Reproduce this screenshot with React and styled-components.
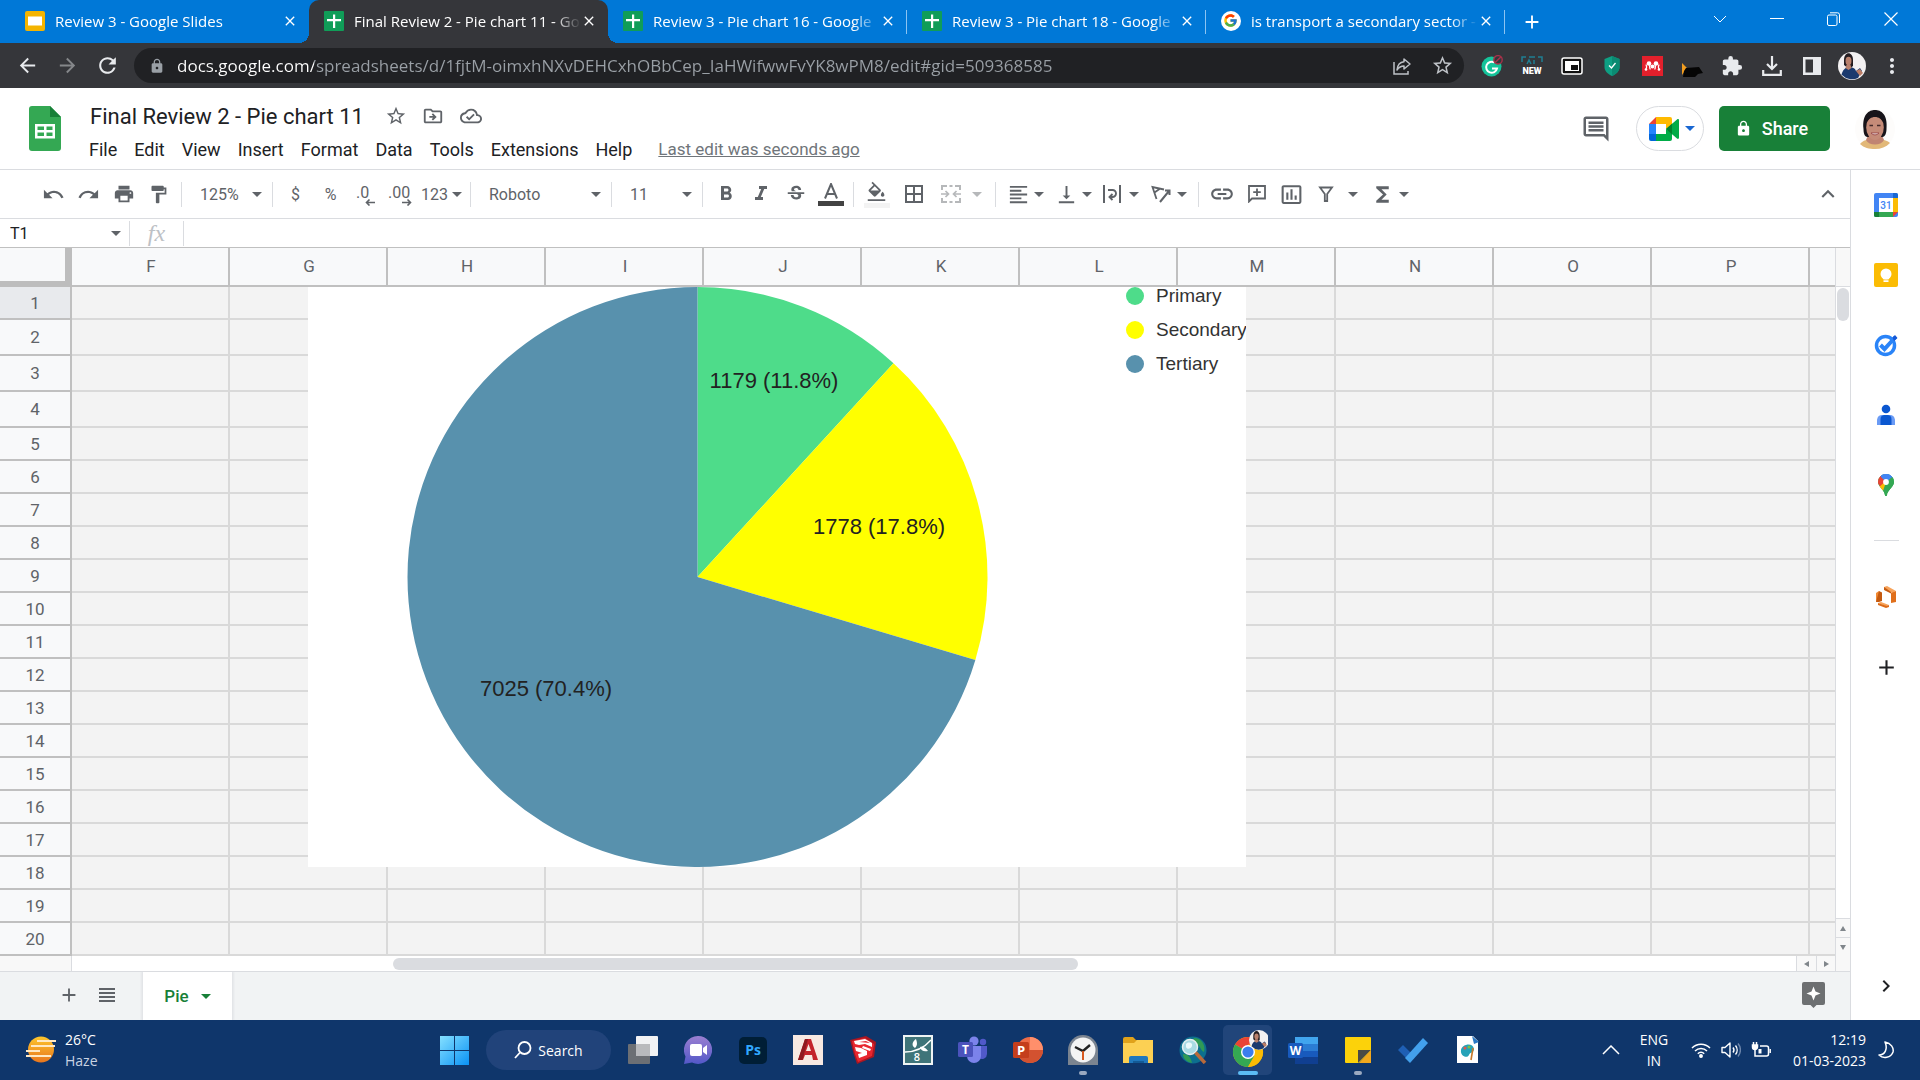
import React from "react";
import styled, { createGlobalStyle, css } from "styled-components";
import {
  MdUndo,
  MdRedo,
  MdPrint,
  MdFormatPaint,
  MdFormatBold,
  MdFormatItalic,
  MdStrikethroughS,
  MdBorderAll,
  MdFormatAlignLeft,
  MdVerticalAlignBottom,
  MdLink,
  MdInsertChartOutlined,
  MdFunctions,
  MdStarBorder,
  MdOutlineDriveFileMove,
  MdOutlineCloudDone,
  MdOutlineInsertComment,
  MdExtension,
  MdFormatColorFill,
  MdRefresh,
  MdMoreVert,
  MdArrowBack,
  MdArrowForward,
  MdClose,
  MdAdd,
  MdLock,
  MdKeyboardArrowUp,
  MdKeyboardArrowRight,
} from "react-icons/md";
import { FcGoogle } from "react-icons/fc";

const GlobalStyle = createGlobalStyle`
  * {
    box-sizing: border-box;
  }

  body {
    margin: 0;
    font-family: Roboto, Arial, sans-serif;
    background: #ffffff;
  }

  button, input, select {
    font: inherit;
    color: inherit;
    margin: 0;
    padding: 0;
    border: none;
    background: none;
    outline: none;
  }

  button {
    cursor: pointer;
  }

  svg {
    display: block;
    flex: none;
  }
`;

const Page = styled.div`
  display: flex;
  flex-direction: column;
  min-height: 100vh;
`;

/* ---------- browser ---------- */

const TabStrip = styled.div`
  display: flex;
  align-items: stretch;
  height: 43px;
  padding-left: 10px;
  background: #0078d7;
  color: #ffffff;
  font-family: "Open Sans", "Segoe UI", sans-serif;
  font-size: 15px;
`;

const Tab = styled.div`
  display: flex;
  align-items: center;
  flex: 0 1 299px;
  min-width: 0;
  padding: 0 11px 2px 15px;
  position: relative;

  ${(props) =>
    props.$divider &&
    css`
      &::after {
        content: "";
        position: absolute;
        right: 0;
        top: 10px;
        width: 1px;
        height: 24px;
        background: #8cc4f2;
      }
    `}

  ${(props) =>
    props.$active &&
    css`
      background: #35363a;
      border-radius: 10px 10px 0 0;

      &::before,
      &::after {
        content: "";
        position: absolute;
        bottom: 0;
        width: 10px;
        height: 10px;
      }

      &::before {
        left: -10px;
        background: radial-gradient(circle at 0 0, transparent 10px, #35363a 10px);
      }

      &::after {
        right: -10px;
        background: radial-gradient(circle at 100% 0, transparent 10px, #35363a 10px);
      }
    `}
`;

const TabTitle = styled.button`
  flex: 1;
  min-width: 0;
  margin-left: 10px;
  text-align: left;
  white-space: nowrap;
  mask-image: linear-gradient(to right, #000 88%, transparent);
`;

const IconButton = styled.button`
  display: flex;
  align-items: center;
  justify-content: center;
  flex: none;
  width: ${(props) => props.$width || 40}px;
  color: ${(props) => props.$color || "inherit"};
`;

const WindowButtons = styled.div`
  display: flex;
  margin-left: auto;
  padding-bottom: 6px;
`;

const AddressBar = styled.div`
  display: flex;
  align-items: center;
  height: 45px;
  padding: 0 8px 0 7px;
  background: #35363a;
  color: #e8eaed;
`;

const Omnibox = styled.div`
  display: flex;
  align-items: center;
  flex: 1;
  height: 35px;
  margin: 0 8px 0 7px;
  padding: 0 2px 0 15px;
  border-radius: 18px;
  background: #202124;
  color: #bdc1c6;
`;

const UrlInput = styled.input`
  flex: 1;
  min-width: 0;
  margin-left: 12px;
  font-family: "Open Sans", "Segoe UI", sans-serif;
  font-size: 17px;
  color: transparent;
  background: linear-gradient(to right, #ffffff 137px, #9aa0a6 137px);
  background-clip: text;
`;

/* ---------- document header ---------- */

const Header = styled.header`
  display: flex;
  align-items: center;
  height: 82px;
  padding: 0 25px 0 29px;
  border-bottom: 1px solid #dadce0;
`;

const HeaderMain = styled.div`
  display: flex;
  flex-direction: column;
  gap: 3px;
  flex: 1;
  padding: 6px 0 0 26px;
`;

const TitleRow = styled.div`
  display: flex;
  align-items: center;
  height: 32px;
  color: #5f6368;
`;

const TitleInput = styled.input`
  width: 290px;
  padding-left: 3px;
  font-size: 22px;
  color: #202124;
`;

const MenuBar = styled.nav`
  display: flex;
  align-items: center;
  height: 28px;
  font-size: 18px;
  color: #202124;
`;

const MenuButton = styled.button`
  padding: 0 8px;
  margin-right: 1px;

  &:first-child {
    padding-left: 2px;
  }
`;

const LastEdit = styled.a`
  margin-left: 17px;
  font-size: 17px;
  color: #70757a;
`;

const HeaderActions = styled.div`
  display: flex;
  align-items: center;
  color: #5f6368;
`;

const MeetButton = styled.button`
  display: flex;
  align-items: center;
  justify-content: center;
  gap: 6px;
  width: 68px;
  height: 45px;
  margin: 0 15px 0 20px;
  padding-left: 3px;
  border: 1px solid #dadce0;
  border-radius: 23px;
  color: #1967d2;
`;

const ShareButton = styled.button`
  display: flex;
  align-items: center;
  justify-content: center;
  gap: 10px;
  width: 111px;
  height: 45px;
  margin-right: 25px;
  padding-right: 6px;
  border-radius: 5px;
  background: #188038;
  color: #ffffff;
  font-size: 18px;
  font-weight: 500;
`;

/* ---------- editor ---------- */

const Workspace = styled.main`
  display: flex;
  flex: 1;
  min-height: 0;
`;

const Editor = styled.section`
  display: flex;
  flex-direction: column;
  flex: 1;
  min-width: 0;
`;

const Toolbar = styled.div`
  display: flex;
  align-items: center;
  height: 49px;
  padding: 0 5px 0 36px;
  border-bottom: 1px solid #dadce0;
  color: #5f6368;
  font-size: 16px;
`;

const Separator = styled.span`
  width: 1px;
  height: 25px;
  margin: 0 5px;
  background: #dadce0;
`;

const Tool = styled.button`
  display: flex;
  align-items: center;
  justify-content: center;
  gap: ${(props) => props.$gap || 4}px;
  flex: none;
  width: ${(props) => props.$width || 35}px;
  height: 32px;
  opacity: ${(props) => (props.$disabled ? 0.45 : 1)};
`;

const Swatch = styled.span`
  display: flex;
  flex-direction: column;
  align-items: center;
  gap: 2px;

  &::after {
    content: "";
    width: 26px;
    height: 5px;
    background: ${(props) => props.$color};
  }
`;

const Dropdown = styled.label`
  display: flex;
  align-items: center;
  width: ${(props) => props.$width}px;
  padding: 0 5px 0 13px;

  select {
    flex: 1;
    min-width: 0;
    appearance: none;
  }
`;

const FormulaBar = styled.div`
  display: flex;
  align-items: center;
  gap: 3px;
  height: 29px;
  border-bottom: 1px solid #c0c0c0;
  color: #5f6368;
`;

const NameBox = styled.input`
  width: 108px;
  padding-left: 10px;
  font-size: 16px;
  color: #202124;
`;

const FormulaLabel = styled.label`
  width: 37px;
  text-align: center;
  font-family: "Liberation Serif", serif;
  font-style: italic;
  font-size: 24px;
  line-height: 24px;
  color: #bdc1c6;
`;

const FormulaInput = styled.input`
  flex: 1;
  height: 24px;
`;

const GridRow = styled.div`
  display: flex;
`;

const Canvas = styled.div`
  position: relative;
  flex: 1;
  min-width: 0;
  overflow: hidden;
`;

const Sheet = styled.table`
  width: 100%;
  table-layout: fixed;
  border-collapse: separate;
  border-spacing: 0;
  font-size: 17px;
  color: #5f6368;

  th {
    padding: 0;
    font-weight: 400;
    background: #f8f9fa;
    border-right: 2px solid #c0c0c0;
    border-bottom: 2px solid #c0c0c0;
  }

  th:last-child,
  td:last-child {
    border-right: none;
  }

  td {
    padding: 0;
    background: #f3f3f3;
    border-right: 2px solid #d9d9d9;
    border-bottom: 2px solid #d9d9d9;
  }

  thead tr {
    height: 39px;
  }

  thead th {
    padding: 0 0 2px 2px;
  }

  thead th:first-child {
    border-right: 7px solid #bdbdbd;
    border-bottom: 6px solid #bdbdbd;
  }
`;

const SheetLine = styled.tr`
  height: ${(props) => props.$height}px;

  th {
    background: ${(props) => (props.$selected ? "#e8eaed" : "#f8f9fa")};
  }
`;

/* the chart floats over the cells */
const ChartFrame = styled.figure`
  position: absolute;
  left: 308px;
  top: 39px;
  margin: 0;
  background: #ffffff;
`;

const ScrollColumn = styled.div`
  display: flex;
  flex-direction: column;
  width: 15px;
  border-left: 1px solid #dadce0;
`;

const ScrollHead = styled.div`
  height: 39px;
  background: #f8f8f8;
  border-bottom: 1px solid #dadce0;
`;

const ThumbV = styled.div`
  width: 12px;
  height: 33px;
  margin: 1px 1px auto;
  border-radius: 6px;
  background: #dadce0;
`;

const ArrowBox = styled.button`
  display: flex;
  align-items: center;
  justify-content: center;
  flex: none;
  width: ${(props) => props.$width}px;
  height: ${(props) => props.$height}px;
  background: #f8f8f8;
  border: 0 solid #dadce0;
  border-top-width: ${(props) => (props.$vertical ? 1 : 0)}px;
  border-left-width: ${(props) => (props.$vertical ? 0 : 1)}px;
  color: #80868b;
`;

const ScrollRow = styled.div`
  display: flex;
  height: 16px;
  border-bottom: 1px solid #dadce0;
`;

const ScrollCorner = styled.div`
  width: ${(props) => props.$width}px;
  background: #f8f8f8;
  border: 0 solid #dadce0;
  border-right-width: ${(props) => (props.$end ? 0 : 1)}px;
  border-left-width: ${(props) => (props.$end ? 1 : 0)}px;
`;

const TrackH = styled.div`
  flex: 1;
  padding: 2px 0 1px 17.35%;
`;

const ThumbH = styled.div`
  width: 48.8%;
  height: 12px;
  border-radius: 6px;
  background: #dadce0;
`;

const SheetBar = styled.div`
  display: flex;
  align-items: center;
  flex: 1;
  min-height: 48px;
  padding: 0 25px 2px 50px;
  background: #f1f3f4;
  color: #5f6368;
`;

const SheetTab = styled.button`
  display: flex;
  align-items: center;
  justify-content: center;
  align-self: stretch;
  gap: 12px;
  width: 89px;
  margin: 0 0 -2px 17px;
  background: #ffffff;
  box-shadow: 0 0 3px 1px #dadce0;
  clip-path: inset(0 -3px);
  color: #188038;
  font-size: 17px;
  font-weight: 500;
`;

const Spacer = styled.div`
  flex: 1;
`;

const SidePanel = styled.aside`
  display: flex;
  flex-direction: column;
  align-items: center;
  width: 70px;
  padding: 0 0 18px 1px;
  border-left: 1px solid #dadce0;
  color: #202124;
`;

const SideButton = styled.button`
  display: flex;
  align-items: center;
  justify-content: center;
  width: 40px;
  height: ${(props) => (props.$small ? 32 : 70)}px;
  margin-top: ${(props) => (props.$small ? "auto" : 0)};
`;

const SideDivider = styled.span`
  width: 25px;
  height: 1px;
  margin: 20px 0 21px;
  background: #dadce0;
`;

/* ---------- taskbar ---------- */

const Taskbar = styled.footer`
  display: grid;
  grid-template-columns: 1fr auto 1fr;
  height: 60px;
  background: #0f366b;
  color: #ffffff;
  font-family: "Open Sans", "Segoe UI", sans-serif;
  font-size: 14px;
  line-height: 21px;
`;

const Weather = styled.div`
  display: flex;
  align-items: center;
  gap: 8px;
  padding-left: 26px;

  span {
    display: block;
  }

  span + span {
    color: #c9d3e2;
  }
`;

const Apps = styled.div`
  display: flex;
  align-items: center;
  padding-left: 2px;
`;

const AppButton = styled.button`
  display: flex;
  align-items: center;
  justify-content: center;
  position: relative;
  width: 49px;
  height: 50px;
  margin: 0 3px;
  border-radius: 5px;
  background: ${(props) => (props.$open === "active" ? "#21457a" : "none")};

  &::after {
    content: "";
    display: ${(props) => (props.$open ? "block" : "none")};
    position: absolute;
    bottom: 0;
    left: 50%;
    transform: translateX(-50%);
    width: ${(props) => (props.$open === "active" ? 20 : 8)}px;
    height: 4px;
    border-radius: 2px;
    background: ${(props) => (props.$open === "active" ? "#5cbcf5" : "#9aa9c0")};
  }
`;

const SearchButton = styled.button`
  display: flex;
  align-items: center;
  justify-content: center;
  gap: 6px;
  width: 125px;
  height: 40px;
  margin: 0 4px;
  border-radius: 20px;
  background: #21437a;
`;

const Tray = styled.div`
  display: flex;
  align-items: center;
  justify-content: flex-end;
  padding-right: 26px;
`;

const Language = styled.div`
  width: 36px;
  margin: 0 19px 0 16px;
  text-align: center;
`;

const TrayIcons = styled.div`
  display: flex;
  align-items: center;
  gap: 10px;
`;

const Clock = styled.time`
  display: block;
  margin: 0 12px 0 22px;
  text-align: right;

  span {
    display: block;
  }
`;

/* ---------- drawings ---------- */

const Caret = ({ size = 10, color = "currentColor" }) => (
  <svg width={size} height={size / 2} viewBox="0 0 10 5">
    <path d="M0 0h10L5 5z" fill={color} />
  </svg>
);

const SheetsFavicon = () => (
  <svg width="20" height="20" viewBox="0 0 20 20">
    <rect width="20" height="20" rx="1" fill="#109d58" />
    <path d="M9 3.500h2.200V8H17v2.200h-5.800V17H9v-6.800H3V8h6z" fill="#fff" />
  </svg>
);

const SlidesFavicon = () => (
  <svg width="20" height="20" viewBox="0 0 20 20">
    <rect width="20" height="20" rx="2" fill="#f4b400" />
    <rect x="3" y="5.500" width="14" height="9" fill="#fff" />
  </svg>
);

const GoogleFavicon = () => (
  <svg width="20" height="20" viewBox="0 0 20 20">
    <circle cx="10" cy="10" r="10" fill="#fff" />
    <FcGoogle x="2" y="2" width="16" height="16" />
  </svg>
);

const SheetsLogo = () => (
  <svg width="32" height="45" viewBox="0 0 32 45">
    <path d="M3 0h18l11 11v31a3 3 0 0 1-3 3H3a3 3 0 0 1-3-3V3a3 3 0 0 1 3-3z" fill="#34a853" />
    <path d="M21 0l11 11H21z" fill="#188038" />
    <path
      d="M6 18h20v14.500H6zM8.500 20.500v3.500H15v-3.500zM17.500 20.500v3.500h6v-3.500zM8.500 26.500V30H15v-3.500zM17.500 26.500V30h6v-3.500z"
      fill="#fff"
      fillRule="evenodd"
    />
  </svg>
);

const ShareArrow = () => (
  <svg width="20" height="20" viewBox="0 0 20 20" fill="none" stroke="currentColor" strokeWidth="1.500">
    <path d="M2 6v12h14v-3" />
    <path d="M12 3l6 5-6 5v-3c-3 0-5 1-7 4 .5-5 3-8 7-8.300z" strokeLinejoin="round" />
  </svg>
);

const Grammarly = () => (
  <svg width="22" height="22" viewBox="0 0 22 22">
    <circle cx="10.500" cy="11.500" r="10" fill="#15c39a" />
    <path d="M13.500 7.500a5.500 5.500 0 1 0 2.500 6h-5" fill="none" stroke="#fff" strokeWidth="2" />
    <circle cx="17" cy="4.800" r="4.200" fill="#35363a" stroke="#a8324a" strokeWidth="1.400" />
    <path d="M14.200 7.600l5.600-5.600" stroke="#a8324a" strokeWidth="1.400" />
  </svg>
);

const NewBadge = () => (
  <svg width="22" height="20" viewBox="0 0 22 20">
    <path d="M1 6V1h4M8 1h6M17 1h4v5M6 8l2-4 2 4M13 4v4" fill="none" stroke="#1f7f93" strokeWidth="1.500" />
    <text x="11" y="18" textAnchor="middle" fontFamily="Roboto" fontWeight="900" fontSize="9" fill="#fff">
      NEW
    </text>
  </svg>
);

const PipIcon = () => (
  <svg width="22" height="18" viewBox="0 0 22 18">
    <rect x="1" y="1" width="20" height="16" rx="2" fill="#111" stroke="#fff" strokeWidth="1.500" />
    <rect x="4" y="4" width="14" height="10" fill="#fff" />
    <rect x="10" y="8" width="7" height="5" fill="#111" />
  </svg>
);

const ShieldIcon = () => (
  <svg width="16" height="20" viewBox="0 0 16 20">
    <path d="M8 0l7.500 3v8c0 4-3 7-7.500 9-4.500-2-7.500-5-7.500-9V3z" fill="#0e9f83" />
    <path d="M8 0l7.500 3v8c0 4-3 7-7.500 9z" fill="#0b8a72" />
    <path d="M5 9.500l2.500 2.500L11.500 7" fill="none" stroke="#fff" strokeWidth="1.300" />
  </svg>
);

const Mendeley = () => (
  <svg width="21" height="20" viewBox="0 0 21 20">
    <rect width="21" height="20" fill="#e3202c" />
    <circle cx="7" cy="7.500" r="2.300" fill="#fff" />
    <circle cx="14" cy="7.500" r="2.300" fill="#fff" />
    <circle cx="10.500" cy="10.500" r="1.900" fill="#fff" />
    <path d="M4 8.500c1 2 1 3 0 5M17 8.500c-1 2-1 3 0 5M8 9c-1 2 0 3 .2 4.500M13 9c1 2 0 3-.2 4.500" fill="none" stroke="#fff" strokeWidth="1.300" />
    <circle cx="4" cy="13.500" r="1.300" fill="#fff" />
    <circle cx="17" cy="13.500" r="1.300" fill="#fff" />
  </svg>
);

const ScholarCap = () => (
  <svg width="21" height="22" viewBox="0 0 21 22">
    <path d="M0 20V8l5 5z" fill="#f29d1f" />
    <path d="M4 13l13-1 4 6-5 1-3 3H1l1-6z" fill="#050505" />
  </svg>
);

const DownloadIcon = () => (
  <svg width="20" height="20" viewBox="0 0 20 20" fill="none" stroke="currentColor" strokeWidth="2.200">
    <path d="M10 0v13M5 8l5 5 5-5M1.200 14v4.800h17.600V14" />
  </svg>
);

const SidebarIcon = () => (
  <svg width="18" height="18" viewBox="0 0 18 18">
    <path d="M0 0h18v18H0zM2.500 2.500v13H10v-13z" fill="currentColor" fillRule="evenodd" />
  </svg>
);

const SmallAvatar = ({ size = 28 }) => (
  <svg width={size} height={size} viewBox="0 0 28 28">
    <circle cx="14" cy="14" r="14" fill="#f3f1f2" />
    <path d="M3.500 23c1-5 4-8 7.500-8s6 1 7 4l4-3 2 3-4 7a14 14 0 0 1-16-3z" fill="#1b3a6e" />
    <path d="M18 19l4-2 3 4-3 3z" fill="#bb7d66" />
    <path d="M6 8c0-9 9-9 9 0v6l-4 3-5-4z" fill="#231c20" />
    <ellipse cx="10.500" cy="9" rx="3" ry="4.200" fill="#b9806c" />
    <path d="M8.500 13h4l1 3-3 2-3-2z" fill="#b9806c" />
  </svg>
);

const UserAvatar = () => (
  <svg width="40" height="40" viewBox="0 0 40 40">
    <circle cx="20" cy="20" r="20" fill="#fdfcfb" />
    <path d="M5 35c3-4 8-4 11-6h8c4 2 8 2 11 5-4 4-9 6-15 6s-11-1-15-5z" fill="#e2b878" />
    <path d="M14 24h12l3 7c-3 6-15 6-18 0z" fill="#c08472" />
    <path d="M8.500 20C7 5 14 1 20 1s13 4 11.500 19c0 5-2 8-4 8h-15c-3 0-4-4-4-8z" fill="#17141a" />
    <ellipse cx="20" cy="18.500" rx="8.800" ry="12.500" fill="#c58b78" />
    <path d="M11 14C12 8 16 5 20 5s8 3 9 9c-3-4-5-6-9-6s-6 2-9 6z" fill="#17141a" />
    <path d="M14.500 16.500h3.500M22 16.500h3.500" stroke="#442a2a" strokeWidth="1.500" />
    <path d="M16 24c2 2.500 6 2.500 8 0z" fill="#fff" stroke="#9b4a4a" />
  </svg>
);

const MeetLogo = () => (
  <svg width="30" height="24" viewBox="0 0 30 24">
    <path d="M7 0v7H0z" fill="#ea4335" />
    <path d="M0 7h7v10H0z" fill="#2684fc" />
    <path d="M0 17h7v7H2a2 2 0 0 1-2-2z" fill="#0066da" />
    <path d="M7 0h14a2 2 0 0 1 2 2v6l-6 4V7H7z" fill="#ffba00" />
    <path d="M7 17h10v-5l6 4v6a2 2 0 0 1-2 2H7z" fill="#00ac47" />
    <path d="M17 12l11-9.500c1-.8 2-.3 2 1v17c0 1.300-1 1.800-2 1z" fill="#00ac47" />
    <path d="M17 12l6-5.200v10.400z" fill="#00832d" />
  </svg>
);

const DecimalIcon = ({ text, right }) => (
  <svg width="26" height="24" viewBox="0 0 26 24">
    <text x={right ? 0 : 3} y="16" fontFamily="Roboto" fontSize="16" fill="currentColor">
      {text}
    </text>
    <path
      d={right ? "M14 20.500h8M19.500 17.500l3 3-3 3" : "M22 20.500h-8M16.500 17.500l-3 3 3 3"}
      stroke="currentColor"
      strokeWidth="1.600"
      fill="none"
    />
  </svg>
);

const MergeIcon = () => (
  <svg width="20" height="18" viewBox="0 0 20 18" fill="none" stroke="currentColor" strokeWidth="2">
    <path d="M1 5V1h5M8.500 1h3M19 5V1h-5M1 13v4h5M8.500 17h3M19 13v4h-5" />
    <path d="M0 9h7M4.500 6L7.500 9l-3 3M20 9h-7M15.500 6l-3 3 3 3" strokeWidth="1.700" />
  </svg>
);

const WrapIcon = () => (
  <svg width="18" height="18" viewBox="0 0 18 18" fill="none" stroke="currentColor" strokeWidth="2">
    <path d="M1 0v18M17 0v18" />
    <path d="M5 5h4.500a3.500 3.500 0 0 1 0 7H7M9.500 9l-3 3 3 3" strokeWidth="1.900" />
  </svg>
);

const RotateIcon = () => (
  <svg width="20" height="18" viewBox="0 0 20 18" fill="none" stroke="currentColor" strokeWidth="1.800">
    <path d="M5.500 14L1.500 2l11.500 2.500M3.500 7.500l5-3.500" />
    <path d="M9 17L18 6M14 5.500h4.500v4.500" strokeWidth="2" />
  </svg>
);

const AddCommentIcon = () => (
  <svg width="18" height="18" viewBox="0 0 18 18" fill="none" stroke="currentColor" strokeWidth="1.800">
    <path d="M1 1h16v12.500H4L1 16.500z" />
    <path d="M9 3.500v7.500M5.200 7.200h7.600" />
  </svg>
);

const FilterIcon = () => (
  <svg width="16" height="16" viewBox="0 0 16 16" fill="none" stroke="currentColor" strokeWidth="1.800">
    <path d="M2 1.500h12L9.200 8v7H6.800V8z" />
  </svg>
);

const CalendarLogo = () => (
  <svg width="24" height="24" viewBox="0 0 24 24">
    <rect width="24" height="24" rx="2" fill="#4285f4" />
    <path d="M19 0h3a2 2 0 0 1 2 2v3h-5z" fill="#1967d2" />
    <path d="M19 5h5v14h-5z" fill="#fbbc04" />
    <path d="M0 19h19v5H2a2 2 0 0 1-2-2z" fill="#34a853" />
    <path d="M0 19h5v5H2a2 2 0 0 1-2-2z" fill="#188038" />
    <path d="M19 19h5l-5 5z" fill="#ea4335" />
    <rect x="5" y="5" width="14" height="14" fill="#fff" />
    <text x="12" y="16" textAnchor="middle" fontFamily="Roboto" fontWeight="500" fontSize="10" fill="#4285f4">
      31
    </text>
  </svg>
);

const KeepLogo = () => (
  <svg width="24" height="24" viewBox="0 0 24 24">
    <rect width="24" height="24" rx="2" fill="#fbbc04" />
    <circle cx="12" cy="11" r="5.500" fill="#fff" />
    <path d="M9 14h6v2.200H9zM9.500 17.200h5v1.800h-5z" fill="#fff" />
  </svg>
);

const TasksLogo = () => (
  <svg width="24" height="24" viewBox="0 0 24 24">
    <circle cx="11.500" cy="12.500" r="9" fill="none" stroke="#2a84f8" strokeWidth="3.500" />
    <path d="M6.500 12l4 4L21.500 4" fill="none" stroke="#2a84f8" strokeWidth="4" />
    <path d="M18.500 4.500L21 2l2.500 3-3.500 3z" fill="#1558d6" />
  </svg>
);

const ContactsLogo = () => (
  <svg width="20" height="22" viewBox="0 0 20 22">
    <circle cx="10" cy="5" r="4.300" fill="#0b57d0" />
    <path d="M1 21v-4c0-4 2-6 5-6h8c3 0 5 2 5 6v4z" fill="#6a9bf5" />
    <path d="M4.500 21v-6c0-3 2-4 4-4h3c2 0 4 1 4 4v6z" fill="#0b57d0" />
  </svg>
);

const MapsLogo = () => (
  <svg width="16" height="22" viewBox="0 0 16 22">
    <clipPath id="pin">
      <path d="M8 0a8 8 0 0 1 8 8c0 5-6 7-7 13.300a1 1 0 0 1-2 0C6 15 0 13 0 8a8 8 0 0 1 8-8z" />
    </clipPath>
    <g clipPath="url(#pin)">
      <rect width="16" height="22" fill="#34a853" />
      <path d="M0 0h16v3L8 8 2 3z" fill="#4285f4" />
      <path d="M0 2l3-1 5 7-5 5-3-3z" fill="#ea4335" />
      <path d="M1 13l7-6 4 4-7 6z" fill="#fbbc04" />
      <path d="M8 8l8-7v12l-10 9-1-5z" fill="#34a853" />
      <path d="M3 0h10l1 3-6 5-5-5z" fill="#4285f4" />
    </g>
    <circle cx="8" cy="8" r="2.900" fill="#fff" />
  </svg>
);

const LucidLogo = () => (
  <svg width="20" height="22" viewBox="0 0 20 22">
    <path d="M0 7l3-2v10l-3 1z" fill="#f28a34" />
    <path d="M3 5l3 1.500V15l-3 1-3 0z" fill="#c45a10" />
    <path d="M8 1l3-1 9 5-4 2-8-3.500z" fill="#f7a35a" />
    <path d="M8 1v3l7 3.500V6z" fill="#c45a10" />
    <path d="M15 7l5-2v11l-5 1z" fill="#e06f1b" />
    <path d="M2 17l3-1 8 3-2 1.500z" fill="#f7a35a" />
    <path d="M2 17v2l8 3 3-1v-2l-2 1z" fill="#dc6a17" />
  </svg>
);

const ExploreIcon = () => (
  <svg width="23" height="26" viewBox="0 0 23 26">
    <path d="M2 0h19a2 2 0 0 1 2 2v19a2 2 0 0 1-2 2h-6.500l-3 3-3-3H2a2 2 0 0 1-2-2V2a2 2 0 0 1 2-2z" fill="#6d6f71" />
    <path d="M11.500 4.500l2 5 5 2-5 2-2 5-2-5-5-2 5-2z" fill="#fff" />
  </svg>
);

const SheetListIcon = () => (
  <svg width="16" height="14" viewBox="0 0 16 14">
    <path d="M0 0h16v2H0zM0 4h16v2H0zM0 8h16v2H0zM0 12h16v2H0z" fill="currentColor" />
  </svg>
);

const HazeIcon = () => (
  <svg width="31" height="28" viewBox="0 0 31 28">
    <defs>
      <linearGradient id="sun" x1="0" y1="0" x2="0" y2="1">
        <stop offset="0" stopColor="#fdc62c" />
        <stop offset="1" stopColor="#e8761e" />
      </linearGradient>
    </defs>
    <circle cx="15" cy="13.500" r="13" fill="url(#sun)" />
    <path d="M11 5h19M5 10h24M0 15h14M0 20h25" stroke="#ffe9c4" strokeWidth="2" />
  </svg>
);

const WindowsLogo = () => (
  <svg width="29" height="29" viewBox="0 0 29 29">
    <defs>
      <linearGradient id="win" x1="0" y1="0" x2="29" y2="29" gradientUnits="userSpaceOnUse">
        <stop offset="0" stopColor="#85e0ff" />
        <stop offset="1" stopColor="#0a92f5" />
      </linearGradient>
    </defs>
    <path d="M0 0h14v14H0zM15 0h14v14H15zM0 15h14v14H0zM15 15h14v14H15z" fill="url(#win)" />
  </svg>
);

const SearchGlyph = () => (
  <svg width="18" height="18" viewBox="0 0 18 18" fill="none" stroke="#fff" strokeWidth="1.800">
    <circle cx="10.500" cy="7" r="6" />
    <path d="M6 11.500L1 17" />
  </svg>
);

const TaskViewIcon = () => (
  <svg width="30" height="28" viewBox="0 0 30 28">
    <rect x="8" y="0" width="22" height="20" rx="1" fill="#f1f2f4" />
    <rect x="0" y="8" width="22" height="20" rx="1" fill="#6c6f74" />
    <rect x="8" y="8" width="14" height="12" fill="#b9babd" />
  </svg>
);

const ChatIcon = () => (
  <svg width="28" height="28" viewBox="0 0 28 28">
    <defs>
      <linearGradient id="chat" x1="0" y1="0" x2="0" y2="1">
        <stop offset="0" stopColor="#9a7fd1" />
        <stop offset="1" stopColor="#5358c8" />
      </linearGradient>
    </defs>
    <path d="M14 0a14 14 0 1 1-6 26.600L0 28l1.500-7.500A14 14 0 0 1 14 0z" fill="url(#chat)" />
    <rect x="6" y="8" width="12" height="12" rx="2" fill="#fff" />
    <path d="M19 12l4-3v10l-4-3z" fill="#fff" />
  </svg>
);

const PhotoshopIcon = () => (
  <svg width="28" height="27" viewBox="0 0 28 27">
    <rect width="28" height="27" rx="5" fill="#001e36" />
    <text x="14" y="18" textAnchor="middle" fontFamily="Open Sans" fontWeight="700" fontSize="14" fill="#31a8ff">
      Ps
    </text>
  </svg>
);

const AutocadIcon = () => (
  <svg width="30" height="30" viewBox="0 0 30 30">
    <rect width="30" height="30" fill="#f7e9e2" />
    <path d="M5 25L12 4h6l7 21h-5l-1-5h-7l-2 5zM13 16h5L15.500 9z" fill="#c3232b" fillRule="evenodd" />
    <path d="M5 25L12 4h3L9.500 25z" fill="#8f1a20" />
  </svg>
);

const SketchupIcon = () => (
  <svg width="26" height="28" viewBox="0 0 26 28">
    <path d="M0 4l16-4 10 6-2 15-17 7-3-9z" fill="#a81722" />
    <path d="M2 5l13-3 9 6-2 12-14 6-3-8z" fill="#e8262f" />
    <path d="M4 5l11-2 7 4v4l-7-3-6 1-4-1z" fill="#fff" />
    <path d="M9 6l7-1 4 2-5-.5z" fill="#e8262f" />
    <path d="M5 11l6 1 6 3v4l-8 3-1-4 4-1-6-2z" fill="#fff" />
    <path d="M13 10l8 3-1 2-8-3z" fill="#fff" />
  </svg>
);

const BranchIcon = () => (
  <svg width="30" height="30" viewBox="0 0 30 30">
    <rect x="1" y="1" width="28" height="28" fill="#3f7479" stroke="#eef3f4" strokeWidth="2" />
    <path d="M2 17c11 0 19-4 26-12" fill="none" stroke="#fff" strokeWidth="1.400" />
    <path d="M12 13c-5-3-1-8 1-9 1 3 2 6-1 9zM17 12c3-1 6 1 8 4-4 1-7 0-8-4z" fill="#fff" />
    <text x="14" y="26" textAnchor="middle" fontFamily="Open Sans" fontWeight="600" fontSize="11" fill="#fff">
      8
    </text>
  </svg>
);

const TeamsIcon = () => (
  <svg width="30" height="28" viewBox="0 0 30 28">
    <circle cx="25" cy="6" r="3.200" fill="#5059c9" />
    <path d="M19 10h10v8a5 5 0 0 1-8 4z" fill="#5059c9" />
    <circle cx="16" cy="5" r="4.600" fill="#7b83eb" />
    <path d="M9 10h14v10a7 7 0 0 1-14 0z" fill="#7b83eb" />
    <rect x="0" y="6" width="15" height="15" rx="1.500" fill="#4b53bc" />
    <text x="7.500" y="18" textAnchor="middle" fontFamily="Open Sans" fontWeight="700" fontSize="12" fill="#fff">
      T
    </text>
  </svg>
);

const PowerpointIcon = () => (
  <svg width="30" height="26" viewBox="0 0 30 26">
    <circle cx="17" cy="13" r="13" fill="#ed6c47" />
    <path d="M17 0a13 13 0 0 1 13 13H17z" fill="#ff8f6b" />
    <path d="M4 13h26a13 13 0 0 1-26 0z" fill="#d35230" />
    <rect x="0" y="5" width="16" height="16" rx="1.500" fill="#c43e1c" />
    <text x="8" y="18" textAnchor="middle" fontFamily="Open Sans" fontWeight="700" fontSize="13" fill="#fff">
      P
    </text>
  </svg>
);

const ClockIcon = () => (
  <svg width="30" height="30" viewBox="0 0 30 30">
    <path d="M0 30V15a15 15 0 0 1 30 0v15z" fill="#7b8490" />
    <circle cx="15" cy="15" r="12.500" fill="#f4f4f4" />
    <path d="M7 12l8 4 7-6" fill="none" stroke="#222" strokeWidth="2.400" />
    <path d="M15 16v9" stroke="#d6581f" strokeWidth="2" />
  </svg>
);

const FolderIcon = () => (
  <svg width="30" height="27" viewBox="0 0 30 27">
    <path d="M0 2a2 2 0 0 1 2-2h8l3 3h15a2 2 0 0 1 2 2v6H0z" fill="#e0a21b" />
    <path d="M0 6h11l3-3h16v23H0z" fill="#fcd053" />
    <path d="M6 26v-5a2 2 0 0 1 2-2h15a2 2 0 0 1 2 2v5z" fill="#1f77bd" />
    <path d="M10 26v-2h11v2z" fill="#135a96" />
  </svg>
);

const GlobeIcon = () => (
  <svg width="30" height="28" viewBox="0 0 30 28">
    <circle cx="15" cy="14" r="13.500" fill="#0d6f8f" />
    <path d="M16 2c8 0 12 8 10 14-4-2-3-6-7-7-3-2-5-4-3-7zM5 18c6 0 8 4 9 9-5-1-9-4-9-9z" fill="#2f9a55" />
    <circle cx="12" cy="11" r="7.500" fill="#a9dbe4" stroke="#e6eef0" strokeWidth="1.500" />
    <path d="M8 8c3-3 7-1 6 2s-5 4-6 1z" fill="#eafafc" />
    <path d="M17.500 16.500L27 27" stroke="#b96a3b" strokeWidth="3.500" />
  </svg>
);

const ChromeIcon = () => (
  <svg width="40" height="42" viewBox="0 0 40 42">
    <circle cx="20" cy="23" r="15" fill="#fbbc04" />
    <path d="M20 23L7 15.500A15 15 0 0 1 33 15.500z" fill="#ea4335" />
    <path d="M7 15.500A15 15 0 0 0 20 38l6.500-11.200L20 23z" fill="#34a853" />
    <path d="M33 15.500H20V23l6.500 3.700L20 38a15 15 0 0 0 13-22.500z" fill="#fbbc04" />
    <circle cx="20" cy="23" r="7" fill="#fff" />
    <circle cx="20" cy="23" r="5.600" fill="#3b7ded" />
    <g transform="translate(21 1)">
      <SmallAvatar size={20} />
    </g>
  </svg>
);

const WordIcon = () => (
  <svg width="30" height="27" viewBox="0 0 30 27">
    <path d="M7 0h23v7H7z" fill="#41a5ee" />
    <path d="M7 7h23v7H7z" fill="#2b7cd3" />
    <path d="M7 14h23v6H7z" fill="#185abd" />
    <path d="M7 20h23v7H7z" fill="#103f91" />
    <rect x="0" y="6" width="15" height="15" rx="1.500" fill="#185abd" />
    <text x="7.500" y="18" textAnchor="middle" fontFamily="Open Sans" fontWeight="700" fontSize="12" fill="#fff">
      W
    </text>
  </svg>
);

const StickyIcon = () => (
  <svg width="26" height="26" viewBox="0 0 26 26">
    <path d="M1 0h24a1 1 0 0 1 1 1v13L14 26H1a1 1 0 0 1-1-1V1a1 1 0 0 1 1-1z" fill="#fcd20a" />
    <path d="M13 13h13L13 26z" fill="#4b4a46" />
    <path d="M26 13v13H14z" fill="#f2a81d" />
  </svg>
);

const TodoIcon = () => (
  <svg width="30" height="25" viewBox="0 0 30 25">
    <path d="M0 12l5-5 8 8-5 5z" fill="#1f5fb4" />
    <path d="M7 20L25 0l5 5-18 20z" fill="#43a0ec" />
  </svg>
);

const PaintFileIcon = () => (
  <svg width="22" height="28" viewBox="0 0 22 28">
    <path d="M0 0h16l5 5v22H0z" fill="#fff" />
    <path d="M4 14c1-6 12-8 13-1 0 4-4 3-5 6-2 4-9 1-8-5z" fill="#25a2b8" />
    <circle cx="8" cy="12" r="1.500" fill="#e2574c" />
    <circle cx="12" cy="11" r="1.500" fill="#7bc043" />
    <path d="M14 24l2-12" stroke="#c77a2b" strokeWidth="1.600" />
    <path d="M15 0l7 6-5 2z" fill="#2a78c4" />
  </svg>
);

const ChevronUp = () => (
  <svg width="18" height="10" viewBox="0 0 18 10" fill="none" stroke="#fff" strokeWidth="1.500">
    <path d="M1 9l8-8 8 8" />
  </svg>
);

const WifiIcon = () => (
  <svg width="20" height="16" viewBox="0 0 20 16" fill="none" stroke="#fff" strokeWidth="1.500">
    <path d="M1 6a12.500 12.500 0 0 1 18 0M4 9a8.500 8.500 0 0 1 12 0M6.800 11.700a4.500 4.500 0 0 1 6.400 0" />
    <circle cx="10" cy="14" r="1.200" fill="#fff" />
  </svg>
);

const VolumeIcon = () => (
  <svg width="20" height="16" viewBox="0 0 20 16" fill="none" stroke="#fff" strokeWidth="1.400">
    <path d="M1 5.500h3L9 1v14l-5-4.500H1z" strokeLinejoin="round" />
    <path d="M12 5.500a4 4 0 0 1 0 5M14.500 3.500a7 7 0 0 1 0 9" />
    <path d="M17 1.500a10 10 0 0 1 0 13" stroke="#6d86ab" />
  </svg>
);

const BatteryIcon = () => (
  <svg width="20" height="17" viewBox="0 0 20 17" fill="none" stroke="#fff" strokeWidth="1.500">
    <path d="M9 4h6.500a2 2 0 0 1 2 2v6a2 2 0 0 1-2 2H4V8" />
    <path d="M1.500 3h5v2a2.500 2.500 0 0 1-5 0zM2.500 0v3M5.500 0v3" fill="#fff" />
    <path d="M7.500 7h3v4.500h-3z" fill="#fff" stroke="none" />
    <path d="M19.200 7v4" />
  </svg>
);

const MoonIcon = () => (
  <svg width="16" height="18" viewBox="0 0 16 18" fill="none" stroke="#fff" strokeWidth="1.500">
    <path d="M7 1c6 1 9 6 8 10-2 6-10 7-14 3 6 0 9-6 6-13z" strokeLinejoin="round" />
  </svg>
);

/* ---------- data ---------- */

const tabs = [
  { title: "Review 3 - Google Slides", icon: <SlidesFavicon /> },
  { title: "Final Review 2 - Pie chart 11 - Go", icon: <SheetsFavicon />, active: true },
  { title: "Review 3 - Pie chart 16 - Google", icon: <SheetsFavicon />, divider: true },
  { title: "Review 3 - Pie chart 18 - Google", icon: <SheetsFavicon />, divider: true },
  { title: "is transport a secondary sector -", icon: <GoogleFavicon />, divider: true },
];

const extensions = [
  ["Grammarly", <Grammarly />],
  ["New", <NewBadge />],
  ["Picture in picture", <PipIcon />],
  ["Shield", <ShieldIcon />],
  ["Mendeley", <Mendeley />],
  ["Scholar", <ScholarCap />],
  ["Extensions", <MdExtension size={22} />],
  ["Downloads", <DownloadIcon />],
  ["Side panel", <SidebarIcon />],
  ["Profile", <SmallAvatar />],
  ["More", <MdMoreVert size={24} />],
];

const menus = ["File", "Edit", "View", "Insert", "Format", "Data", "Tools", "Extensions", "Help"];

const columns = ["F", "G", "H", "I", "J", "K", "L", "M", "N", "O", "P"];

const rows = Array.from({ length: 20 }, (_, i) => ({
  number: i + 1,
  height: i > 0 && i < 4 ? 36 : 33,
}));

const slices = [
  { name: "Primary", value: 1179, label: "1179 (11.8%)", color: "#4edc8a", x: 466, y: 101 },
  { name: "Secondary", value: 1778, label: "1778 (17.8%)", color: "#ffff00", x: 571, y: 247 },
  { name: "Tertiary", value: 7025, label: "7025 (70.4%)", color: "#5891ad", x: 238, y: 409 },
];

const sideApps = [
  ["Calendar", <CalendarLogo />],
  ["Keep", <KeepLogo />],
  ["Tasks", <TasksLogo />],
  ["Contacts", <ContactsLogo />],
  ["Maps", <MapsLogo />],
];

const taskbarApps = [
  ["Task view", <TaskViewIcon />],
  ["Chat", <ChatIcon />],
  ["Photoshop", <PhotoshopIcon />],
  ["AutoCAD", <AutocadIcon />],
  ["SketchUp", <SketchupIcon />],
  ["Analysis", <BranchIcon />],
  ["Teams", <TeamsIcon />],
  ["PowerPoint", <PowerpointIcon />],
  ["Clock", <ClockIcon />, "idle"],
  ["File Explorer", <FolderIcon />],
  ["ArcMap", <GlobeIcon />],
  ["Chrome", <ChromeIcon />, "active"],
  ["Word", <WordIcon />],
  ["Sticky Notes", <StickyIcon />, "idle"],
  ["To Do", <TodoIcon />],
  ["Paint file", <PaintFileIcon />],
];

/* ---------- sections ---------- */

const PieChart = () => {
  const cx = 389.5;
  const cy = 290;
  const r = 290;
  const total = slices.reduce((sum, s) => sum + s.value, 0);
  let angle = 0;

  const point = (a) => `${cx + r * Math.sin(a)} ${cy - r * Math.cos(a)}`;

  return (
    <ChartFrame>
      <svg width="938" height="580" viewBox="0 0 938 580" fontFamily="Liberation Sans, Arial, sans-serif">
        {slices.map((slice) => {
          const start = angle;
          angle += (slice.value / total) * Math.PI * 2;
          const large = angle - start > Math.PI ? 1 : 0;
          return (
            <path
              key={slice.name}
              d={`M${cx} ${cy}L${point(start)}A${r} ${r} 0 ${large} 1 ${point(angle)}Z`}
              fill={slice.color}
            />
          );
        })}
        {slices.map((slice, i) => (
          <g key={slice.name}>
            <text x={slice.x} y={slice.y} textAnchor="middle" fontSize="22" fill="#222222">
              {slice.label}
            </text>
            <circle cx="827" cy={9 + i * 34} r="9" fill={slice.color} />
            <text x="848" y={15 + i * 34} fontSize="19" fill="#333333">
              {slice.name}
            </text>
          </g>
        ))}
      </svg>
    </ChartFrame>
  );
};

const Browser = () => (
  <>
    <TabStrip>
      {tabs.map((tab) => (
        <Tab key={tab.title} $active={tab.active} $divider={tab.divider}>
          {tab.icon}
          <TabTitle>{tab.title}</TabTitle>
          <IconButton $width={16} aria-label="Close tab">
            <MdClose size={16} />
          </IconButton>
        </Tab>
      ))}
      <IconButton $width={54} aria-label="New tab">
        <MdAdd size={22} />
      </IconButton>
      <WindowButtons>
        <IconButton $width={57} aria-label="Search tabs">
          <svg width="14" height="8" viewBox="0 0 14 8" fill="none" stroke="currentColor">
            <path d="M1 1l6 6 6-6" />
          </svg>
        </IconButton>
        <IconButton $width={57} aria-label="Minimize">
          <svg width="14" height="2" viewBox="0 0 14 2">
            <path d="M0 0h14v1H0z" fill="currentColor" />
          </svg>
        </IconButton>
        <IconButton $width={57} aria-label="Restore">
          <svg width="13" height="14" viewBox="0 0 13 14" fill="none" stroke="currentColor">
            <rect x=".5" y="3" width="9.500" height="10.500" rx="1.500" />
            <path d="M3 .8h7.500a2 2 0 0 1 2 2V11" />
          </svg>
        </IconButton>
        <IconButton $width={58} aria-label="Close">
          <svg width="14" height="14" viewBox="0 0 14 14" fill="none" stroke="currentColor" strokeWidth="1.200">
            <path d="M.5 .5l13 13M13.500 .5l-13 13" />
          </svg>
        </IconButton>
      </WindowButtons>
    </TabStrip>
    <AddressBar>
      <IconButton aria-label="Back">
        <MdArrowBack size={23} />
      </IconButton>
      <IconButton aria-label="Forward" $color="#85878a">
        <MdArrowForward size={23} />
      </IconButton>
      <IconButton aria-label="Reload">
        <MdRefresh size={25} />
      </IconButton>
      <Omnibox>
        <MdLock size={16} color="#9aa0a6" />
        <UrlInput
          aria-label="Address"
          defaultValue="docs.google.com/spreadsheets/d/1fjtM-oimxhNXvDEHCxhOBbCep_IaHWifwwFvYK8wPM8/edit#gid=509368585"
        />
        <IconButton aria-label="Share this page">
          <ShareArrow />
        </IconButton>
        <IconButton aria-label="Bookmark">
          <MdStarBorder size={23} />
        </IconButton>
      </Omnibox>
      {extensions.map(([name, icon]) => (
        <IconButton key={name} aria-label={name}>
          {icon}
        </IconButton>
      ))}
    </AddressBar>
  </>
);

const DocHeader = () => (
  <Header>
    <SheetsLogo />
    <HeaderMain>
      <TitleRow>
        <TitleInput aria-label="Document title" defaultValue="Final Review 2 - Pie chart 11" />
        <IconButton $width={37} aria-label="Star">
          <MdStarBorder size={22} />
        </IconButton>
        <IconButton $width={37} aria-label="Move">
          <MdOutlineDriveFileMove size={22} />
        </IconButton>
        <IconButton $width={39} aria-label="Document status">
          <MdOutlineCloudDone size={22} />
        </IconButton>
      </TitleRow>
      <MenuBar>
        {menus.map((menu) => (
          <MenuButton key={menu}>{menu}</MenuButton>
        ))}
        <LastEdit href="#history">Last edit was seconds ago</LastEdit>
      </MenuBar>
    </HeaderMain>
    <HeaderActions>
      <IconButton aria-label="Comments">
        <MdOutlineInsertComment size={30} />
      </IconButton>
      <MeetButton aria-label="Meet">
        <MeetLogo />
        <Caret />
      </MeetButton>
      <ShareButton>
        <MdLock size={17} />
        Share
      </ShareButton>
      <UserAvatar />
    </HeaderActions>
  </Header>
);

const EditorTools = () => (
  <Toolbar>
    <Tool aria-label="Undo"><MdUndo size={23} /></Tool>
    <Tool aria-label="Redo"><MdRedo size={23} /></Tool>
    <Tool aria-label="Print"><MdPrint size={22} /></Tool>
    <Tool aria-label="Paint format"><MdFormatPaint size={21} /></Tool>
    <Separator />
    <Dropdown $width={80}>
      <select aria-label="Zoom"><option>125%</option></select>
      <Caret />
    </Dropdown>
    <Separator />
    <Tool>$</Tool>
    <Tool>%</Tool>
    <Tool aria-label="Decrease decimals"><DecimalIcon text=".0" /></Tool>
    <Tool aria-label="Increase decimals"><DecimalIcon text=".00" right /></Tool>
    <Tool $width={47}>
      123
      <Caret />
    </Tool>
    <Separator />
    <Dropdown $width={130}>
      <select aria-label="Font"><option>Roboto</option></select>
      <Caret />
    </Dropdown>
    <Separator />
    <Dropdown $width={80}>
      <select aria-label="Font size"><option>11</option></select>
      <Caret />
    </Dropdown>
    <Separator />
    <Tool aria-label="Bold"><MdFormatBold size={24} /></Tool>
    <Tool aria-label="Italic"><MdFormatItalic size={24} /></Tool>
    <Tool aria-label="Strikethrough"><MdStrikethroughS size={22} /></Tool>
    <Tool aria-label="Text color">
      <Swatch $color="#434343">
        <svg width="16" height="16" viewBox="0 0 16 16" fill="none" stroke="currentColor" strokeWidth="2">
          <path d="M2 15.500L8 1l6 14.500M4 11h8" />
        </svg>
      </Swatch>
    </Tool>
    <Separator />
    <Tool aria-label="Fill color">
      <Swatch $color="#f3f3f3">
        <MdFormatColorFill size={21} viewBox="0 0 24 20" />
      </Swatch>
    </Tool>
    <Tool $width={39} aria-label="Borders"><MdBorderAll size={24} /></Tool>
    <Tool $width={57} $gap={11} $disabled aria-label="Merge cells">
      <MergeIcon />
      <Caret />
    </Tool>
    <Separator />
    <Tool $width={48} aria-label="Horizontal align">
      <MdFormatAlignLeft size={23} />
      <Caret />
    </Tool>
    <Tool $width={48} aria-label="Vertical align">
      <MdVerticalAlignBottom size={23} />
      <Caret />
    </Tool>
    <Tool $width={48} $gap={8} aria-label="Text wrapping">
      <WrapIcon />
      <Caret />
    </Tool>
    <Tool $width={48} $gap={6} aria-label="Text rotation">
      <RotateIcon />
      <Caret />
    </Tool>
    <Separator />
    <Tool aria-label="Insert link"><MdLink size={26} /></Tool>
    <Tool aria-label="Insert comment"><AddCommentIcon /></Tool>
    <Tool aria-label="Insert chart"><MdInsertChartOutlined size={25} /></Tool>
    <Tool $width={58} $gap={14} aria-label="Create a filter">
      <FilterIcon />
      <Caret />
    </Tool>
    <Tool $width={44} aria-label="Functions">
      <MdFunctions size={25} />
      <Caret />
    </Tool>
    <Spacer />
    <Tool aria-label="Hide the menus"><MdKeyboardArrowUp size={26} /></Tool>
  </Toolbar>
);

const Grid = () => (
  <GridRow>
    <Canvas>
      <Sheet>
        <colgroup>
          <col width="72" />
          {columns.map((name) => (
            <col key={name} width="158" />
          ))}
          <col />
        </colgroup>
        <thead>
          <tr>
            <th aria-label="Select all" />
            {columns.map((name) => (
              <th key={name}>{name}</th>
            ))}
            <th />
          </tr>
        </thead>
        <tbody>
          {rows.map((row) => (
            <SheetLine key={row.number} $height={row.height} $selected={row.number === 1}>
              <th>{row.number}</th>
              {columns.map((name) => (
                <td key={name} />
              ))}
              <td />
            </SheetLine>
          ))}
        </tbody>
      </Sheet>
      <PieChart />
    </Canvas>
    <ScrollColumn>
      <ScrollHead />
      <ThumbV />
      <ArrowBox $vertical $width={14} $height={19} aria-label="Scroll up">
        <svg width="6" height="5" viewBox="0 0 6 5"><path d="M3 0l3 5H0z" fill="currentColor" /></svg>
      </ArrowBox>
      <ArrowBox $vertical $width={14} $height={19} aria-label="Scroll down">
        <svg width="6" height="5" viewBox="0 0 6 5"><path d="M3 5l3-5H0z" fill="currentColor" /></svg>
      </ArrowBox>
    </ScrollColumn>
  </GridRow>
);

const App = () => (
  <>
    <GlobalStyle />
    <Page>
      <Browser />
      <DocHeader />
      <Workspace>
        <Editor>
          <EditorTools />
          <FormulaBar>
            <NameBox aria-label="Name box" defaultValue="T1" />
            <Caret />
            <Separator />
            <FormulaLabel htmlFor="formula">fx</FormulaLabel>
            <Separator />
            <FormulaInput id="formula" />
          </FormulaBar>
          <Grid />
          <ScrollRow>
            <ScrollCorner $width={72} />
            <TrackH>
              <ThumbH />
            </TrackH>
            <ArrowBox $width={20} $height={15} aria-label="Scroll left">
              <svg width="5" height="6" viewBox="0 0 5 6"><path d="M0 3l5-3v6z" fill="currentColor" /></svg>
            </ArrowBox>
            <ArrowBox $width={19} $height={15} aria-label="Scroll right">
              <svg width="5" height="6" viewBox="0 0 5 6"><path d="M5 3L0 0v6z" fill="currentColor" /></svg>
            </ArrowBox>
            <ScrollCorner $end $width={15} />
          </ScrollRow>
          <SheetBar>
            <IconButton $width={38} aria-label="Add sheet"><MdAdd size={22} /></IconButton>
            <IconButton $width={38} aria-label="All sheets"><SheetListIcon /></IconButton>
            <SheetTab>
              Pie
              <Caret />
            </SheetTab>
            <Spacer />
            <IconButton $width={23} aria-label="Explore"><ExploreIcon /></IconButton>
          </SheetBar>
        </Editor>
        <SidePanel>
          {sideApps.map(([name, icon]) => (
            <SideButton key={name} aria-label={name}>{icon}</SideButton>
          ))}
          <SideDivider />
          <SideButton aria-label="Lucid"><LucidLogo /></SideButton>
          <SideButton aria-label="Get add-ons"><MdAdd size={25} /></SideButton>
          <SideButton $small aria-label="Hide side panel"><MdKeyboardArrowRight size={24} /></SideButton>
        </SidePanel>
      </Workspace>
      <Taskbar>
        <Weather>
          <HazeIcon />
          <div>
            <span>26°C</span>
            <span>Haze</span>
          </div>
        </Weather>
        <Apps>
          <AppButton aria-label="Start"><WindowsLogo /></AppButton>
          <SearchButton>
            <SearchGlyph />
            Search
          </SearchButton>
          {taskbarApps.map(([name, icon, open]) => (
            <AppButton key={name} aria-label={name} $open={open}>{icon}</AppButton>
          ))}
        </Apps>
        <Tray>
          <ChevronUp />
          <Language>ENG IN</Language>
          <TrayIcons>
            <WifiIcon />
            <VolumeIcon />
            <BatteryIcon />
          </TrayIcons>
          <Clock>
            <span>12:19</span>
            <span>01-03-2023</span>
          </Clock>
          <MoonIcon />
        </Tray>
      </Taskbar>
    </Page>
  </>
);

export default App;
